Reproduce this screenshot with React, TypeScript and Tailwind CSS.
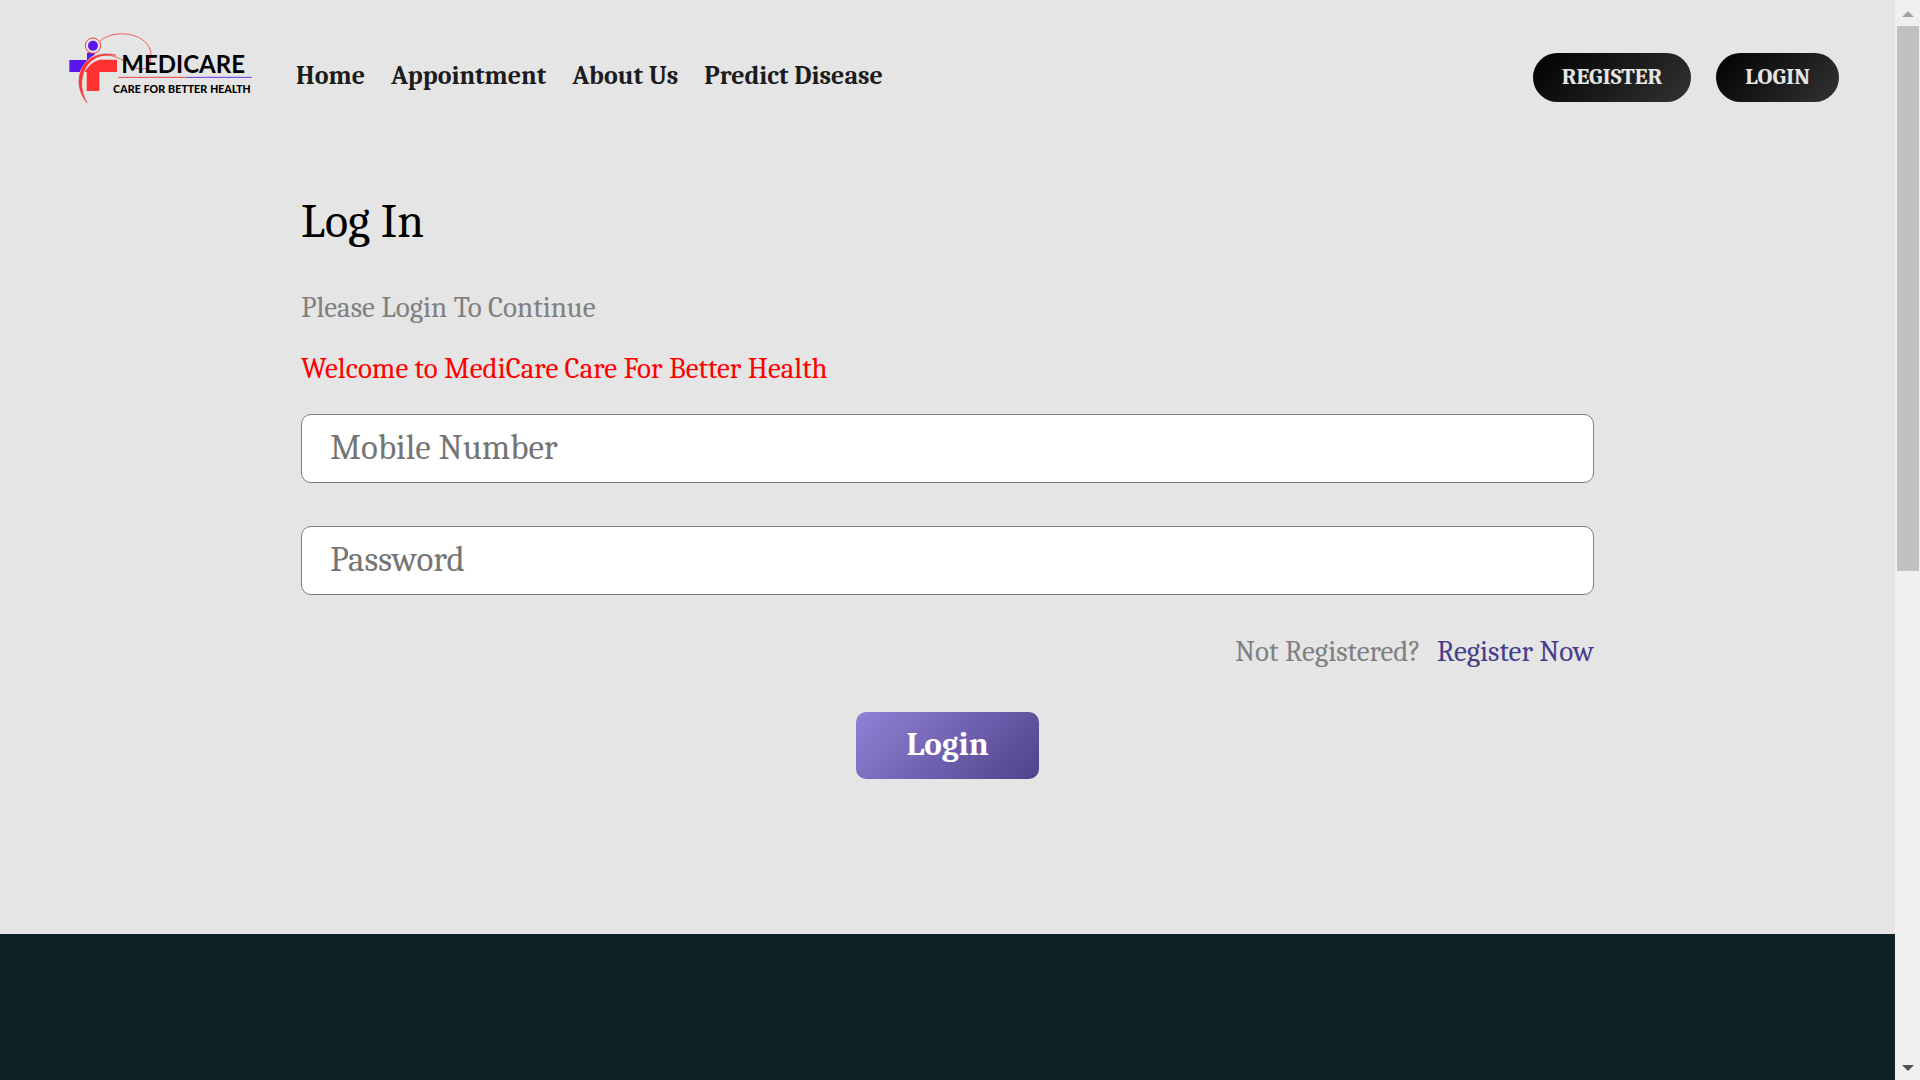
import React from "react";

const navLinks = ["Home", "Appointment", "About Us", "Predict Disease"];

function Logo() {
  return (
    <svg viewBox="0 0 600 342" className="w-[200px] shrink-0" role="img" aria-label="Medicare, care for better health">
      <path d="M117 66C140 44 170 40 196 42C245 46 272 75 273 103C273 135 262 146 246 147C226 148 207 135 190 122C172 110 150 104 125 105" fill="none" stroke="#ef4444" strokeWidth="2.5" />
      <path d="M28 120H81V98H104V104C84 116 68 134 59 156H28Z" fill="#5b17eb" />
      <circle cx="99" cy="77" r="23" fill="#e5e5e5" stroke="#f03a3a" strokeWidth="3" />
      <circle cx="99" cy="77" r="15" fill="#5b17eb" />
      <path d="M80 156H74C84 138 98 126 118 119H171V156H118V213H80Z" fill="#ff3131" />
      <path d="M81 248C55 216 50 178 66 145C84 110 124 94 168 106C122 99 90 116 74 149C60 180 62 215 81 248Z" fill="#ff3131" stroke="#f23b3b" strokeWidth="2" />
      <path d="M175 172H376" stroke="#ee4444" strokeWidth="3" />
      <path d="M376 172H575" stroke="#6535e0" strokeWidth="3" />
      <text x="184" y="159" fontSize="72" className="font-['Lato',sans-serif] font-bold">MEDICARE</text>
      <text x="160" y="218" fontSize="38" className="font-['Carlito','Lato',sans-serif] font-bold">CARE FOR BETTER HEALTH</text>
    </svg>
  );
}

function HeaderButton({ children }: { children: string }) {
  return (
    <button type="button" className="rounded-full bg-linear-[135deg] from-black to-[#333] px-[29px] pt-[7px] pb-[9px] text-[23px] leading-[33px] font-bold text-[#e5e5e5]">
      {children}
    </button>
  );
}

function Field({ label, id, type }: { label: string; id: string; type: string }) {
  return (
    <input
      id={id}
      type={type}
      aria-label={label}
      placeholder={label}
      className="block w-full rounded-[10px] border border-[#808080] bg-white px-7 pt-3 pb-[13px] text-[35px] leading-[42px] text-black outline-none placeholder:text-[#757575]"
    />
  );
}

function Scrollbar() {
  return (
    <div aria-hidden="true" className="flex w-[25px] shrink-0 flex-col items-center justify-between bg-[#f0f0f0]">
      <svg viewBox="0 0 25 26" className="w-[25px]"><path d="M7 17L13 11L19 17Z" fill="#a3a3a3" /></svg>
      <div className="flex w-[22px] flex-1 flex-col">
        <div className="basis-[53%] bg-[#c1c1c1]" />
      </div>
      <svg viewBox="0 0 25 26" className="w-[25px]"><path d="M7 11L13 17L19 11Z" fill="#505050" /></svg>
    </div>
  );
}

export default function App() {
  return (
    <div className="flex min-h-screen bg-[#e5e5e5] font-[Cambria,Caladea,'Liberation_Serif',serif]">
      <div className="flex flex-1 flex-col">
        <header className="flex items-center py-5 pr-14 pl-[60px]">
          <Logo />
          <nav className="ml-9 flex gap-[26px] pb-0.5 text-[26px] leading-9 font-bold text-[#1c1c1c]">
            {navLinks.map((name) => (
              <a key={name} href="#">{name}</a>
            ))}
          </nav>
          <div className="ml-auto flex gap-[25px]">
            <HeaderButton>REGISTER</HeaderButton>
            <HeaderButton>LOGIN</HeaderButton>
          </div>
        </header>

        <main className="mx-auto w-full max-w-[1293px] pt-10 pb-[155px]">
          <h1 className="text-[48px] leading-[56px] text-black">Log In</h1>
          <p className="mt-10 text-[29px] leading-9 text-[#808080]">Please Login To Continue</p>
          <p className="mt-[25px] mb-[27px] text-[29px] leading-9 text-[#ff0000]">Welcome to MediCare Care For Better Health</p>
          <form>
            <div className="flex flex-col gap-[43px]">
              <Field id="mobile" type="tel" label="Mobile Number" />
              <Field id="password" type="password" label="Password" />
            </div>
            <p className="mt-[39px] flex justify-end gap-4 text-[29px] leading-9 text-[#808080]">
              Not Registered?
              <a href="#" className="text-[#483d8b]">Register Now</a>
            </p>
            <button type="submit" className="mx-auto mt-[42px] block rounded-[10px] bg-linear-[135deg] from-[#9182d6] to-[#50418c] px-[50px] pt-[11px] pb-[13px] text-[33px] leading-[43px] font-bold text-white">
              Login
            </button>
          </form>
        </main>

        <footer className="flex-1 bg-[#0f2027]" />
      </div>
      <Scrollbar />
    </div>
  );
}
